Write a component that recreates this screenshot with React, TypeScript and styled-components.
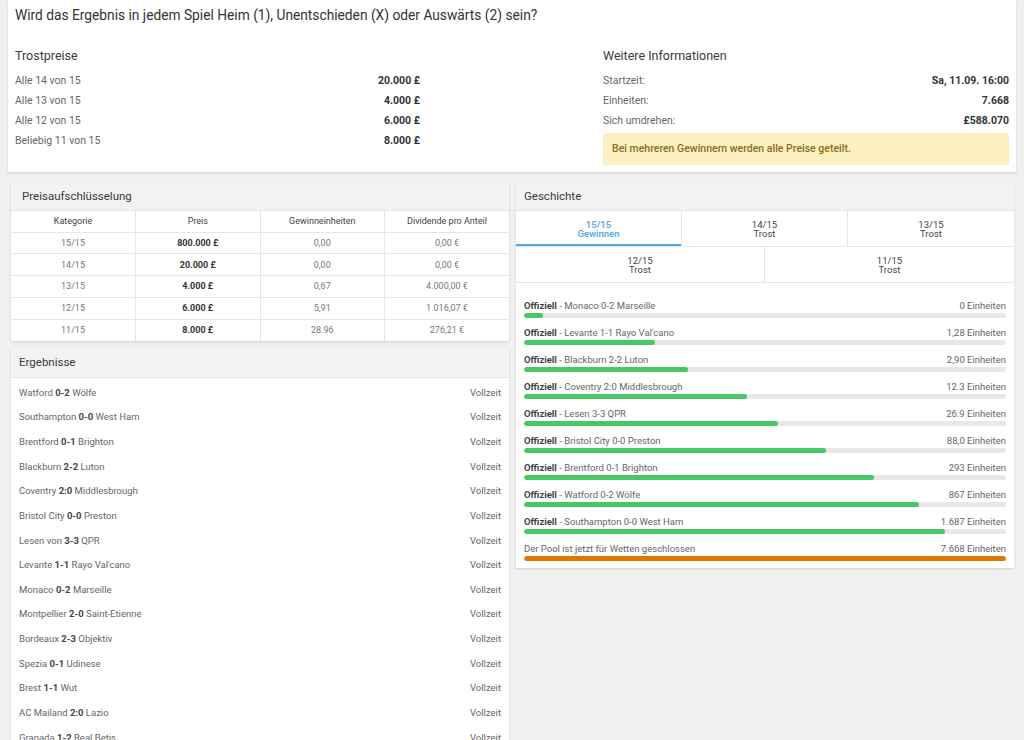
import React from "react";
import styled, { createGlobalStyle } from "styled-components";

const Global = createGlobalStyle`
  html, body { margin: 0; padding: 0; background: #f0f0f0; }
  body { font-family: Roboto, "Noto Sans", "Liberation Sans", sans-serif; color: #555; }
  * { box-sizing: border-box; }
`;

const Page = styled.div`
  width: 1024px;
  min-height: 740px;
  overflow: hidden;
`;

const TopCard = styled.section`
  margin: 0 8px;
  height: 172px;
  background: #fff;
  box-shadow: 0 1px 2px rgba(0, 0, 0, 0.12);
  padding: 6px 7px 0;
`;

const Title = styled.h1`
  margin: 0;
  font-size: 13.75px;
  line-height: 19px;
  font-weight: 400;
  color: #333;
`;

const InfoGrid = styled.div`
  display: grid;
  grid-template-columns: 405px 1fr 406px;
  margin-top: 21px;
`;

const InfoCol = styled.div<{ $col: number }>`
  grid-column: ${(p) => p.$col};
  display: flex;
  flex-direction: column;
`;

const InfoHeading = styled.h2`
  margin: 0 0 5px;
  font-size: 12.5px;
  line-height: 20px;
  font-weight: 400;
  color: #3a3a3a;
`;

const InfoRow = styled.div`
  display: flex;
  justify-content: space-between;
  font-size: 10.5px;
  line-height: 20px;
  color: #666;
`;

const InfoValue = styled.span`
  font-weight: 700;
  color: #333;
`;

const Notice = styled.div`
  margin-top: 2px;
  height: 32px;
  background: #fdf1c2;
  border-radius: 2px;
  color: #8a6d12;
  font-size: 10.5px;
  font-weight: 500;
  line-height: 32px;
  padding: 0 9px;
`;

const Lower = styled.div`
  display: grid;
  grid-template-columns: 498px 498px;
  gap: 7px;
  margin: 9px 10px 0 11px;
  align-items: start;
`;

const Column = styled.div`
  display: flex;
  flex-direction: column;
  gap: 7px;
`;

const Panel = styled.section`
  background: #fff;
  box-shadow: 0 1px 2px rgba(0, 0, 0, 0.14);
`;

const PanelHeader = styled.div<{ $pad: number }>`
  height: 30px;
  background: #f2f2f2;
  padding: 0 ${(p) => p.$pad}px;
  display: flex;
  align-items: center;
  font-size: 11.5px;
  font-weight: 400;
  color: #3a3a3a;
  border-bottom: 1px solid #e6e6e6;
`;

const Table = styled.table`
  width: 100%;
  border-collapse: collapse;
  table-layout: fixed;
  font-size: 9px;
  color: #666;
`;

const Th = styled.th`
  height: 21px;
  font-weight: 400;
  color: #444;
  border: 1px solid #e6e6e6;
  border-top: 0;
  text-align: center;
  &:first-child { border-left: 0; }
  &:last-child { border-right: 0; }
`;

const Td = styled.td<{ $bold?: boolean }>`
  height: 21.8px;
  padding: 0;
  text-align: center;
  border: 1px solid #e6e6e6;
  font-weight: ${(p) => (p.$bold ? 700 : 400)};
  color: ${(p) => (p.$bold ? "#333" : "#777")};
  &:first-child { border-left: 0; }
  &:last-child { border-right: 0; }
  tr:last-child & { border-bottom: 0; }
`;

const ResultList = styled.div`
  padding-top: 2px;
`;

const ResultRow = styled.div`
  height: 24.64px;
  padding: 0 8px;
  display: flex;
  justify-content: space-between;
  align-items: center;
  font-size: 9.5px;
  color: #666;
`;

const Score = styled.b`
  font-weight: 700;
  color: #444;
`;

const TabRow = styled.div<{ $cols: number }>`
  display: grid;
  grid-template-columns: repeat(${(p) => p.$cols}, 1fr);
  border-bottom: 1px solid #e6e6e6;
`;

const Tab = styled.div<{ $active?: boolean }>`
  height: 35px;
  display: flex;
  flex-direction: column;
  align-items: center;
  justify-content: center;
  font-size: 9.5px;
  line-height: 9px;
  color: ${(p) => (p.$active ? "#4ea6e2" : "#444")};
  font-weight: ${(p) => (p.$active ? 500 : 400)};
  border-right: 1px solid #e6e6e6;
  box-shadow: ${(p) => (p.$active ? "inset 0 -2px 0 #4ea6e2" : "none")};
  &:last-child { border-right: 0; }
`;

const HistoryList = styled.div`
  padding: 16px 8px 7px;
  display: flex;
  flex-direction: column;
  gap: 8px;
`;

const HistoryItem = styled.div`
  display: flex;
  flex-direction: column;
`;

const HistoryLabel = styled.div`
  display: flex;
  justify-content: space-between;
  font-size: 9.5px;
  line-height: 14px;
  color: #666;
`;

const Official = styled.b`
  font-weight: 700;
  color: #444;
`;

const Track = styled.div`
  height: 5px;
  border-radius: 3px;
  background: #e8e8e8;
  overflow: hidden;
`;

const Fill = styled.div<{ $orange?: boolean }>`
  height: 100%;
  border-radius: 3px;
  background: ${(p) => (p.$orange ? "#e07800" : "#48c764")};
`;

const consolation = [
  ["Alle 14 von 15", "20.000 £"],
  ["Alle 13 von 15", "4.000 £"],
  ["Alle 12 von 15", "6.000 £"],
  ["Beliebig 11 von 15", "8.000 £"],
];

const info = [
  ["Startzeit:", "Sa, 11.09. 16:00"],
  ["Einheiten:", "7.668"],
  ["Sich umdrehen:", "£588.070"],
];

const breakdown = [
  ["15/15", "800.000 £", "0,00", "0,00 €"],
  ["14/15", "20.000 £", "0,00", "0,00 €"],
  ["13/15", "4.000 £", "0,67", "4.000,00 €"],
  ["12/15", "6.000 £", "5,91", "1.016,07 €"],
  ["11/15", "8.000 £", "28.96", "276,21 €"],
];

const results = [
  ["Watford", "0-2", "Wölfe"],
  ["Southampton", "0-0", "West Ham"],
  ["Brentford", "0-1", "Brighton"],
  ["Blackburn", "2-2", "Luton"],
  ["Coventry", "2:0", "Middlesbrough"],
  ["Bristol City", "0-0", "Preston"],
  ["Lesen von", "3-3", "QPR"],
  ["Levante", "1-1", "Rayo Val'cano"],
  ["Monaco", "0-2", "Marseille"],
  ["Montpellier", "2-0", "Saint-Etienne"],
  ["Bordeaux", "2-3", "Objektiv"],
  ["Spezia", "0-1", "Udinese"],
  ["Brest", "1-1", "Wut"],
  ["AC Mailand", "2:0", "Lazio"],
  ["Granada", "1-2", "Real Betis"],
];

const history: [string, string, number][] = [
  ["Monaco 0-2 Marseille", "0 Einheiten", 4],
  ["Levante 1-1 Rayo Val'cano", "1,28 Einheiten", 27.2],
  ["Blackburn 2-2 Luton", "2,90 Einheiten", 34],
  ["Coventry 2:0 Middlesbrough", "12.3 Einheiten", 46.3],
  ["Lesen 3-3 QPR", "26.9 Einheiten", 52.7],
  ["Bristol City 0-0 Preston", "88,0 Einheiten", 62.7],
  ["Brentford 0-1 Brighton", "293 Einheiten", 72.6],
  ["Watford 0-2 Wölfe", "867 Einheiten", 81.9],
  ["Southampton 0-0 West Ham", "1.687 Einheiten", 87.3],
];

export default function App() {
  return (
    <Page>
      <Global />
      <TopCard>
        <Title>Wird das Ergebnis in jedem Spiel Heim (1), Unentschieden (X) oder Auswärts (2) sein?</Title>
        <InfoGrid>
          <InfoCol $col={1}>
            <InfoHeading>Trostpreise</InfoHeading>
            {consolation.map(([l, v]) => (
              <InfoRow key={l}>
                <span>{l}</span>
                <InfoValue>{v}</InfoValue>
              </InfoRow>
            ))}
          </InfoCol>
          <InfoCol $col={3}>
            <InfoHeading>Weitere Informationen</InfoHeading>
            {info.map(([l, v]) => (
              <InfoRow key={l}>
                <span>{l}</span>
                <InfoValue>{v}</InfoValue>
              </InfoRow>
            ))}
            <Notice>Bei mehreren Gewinnern werden alle Preise geteilt.</Notice>
          </InfoCol>
        </InfoGrid>
      </TopCard>
      <Lower>
        <Column>
          <Panel>
            <PanelHeader $pad={11}>Preisaufschlüsselung</PanelHeader>
            <Table>
              <thead>
                <tr>
                  <Th>Kategorie</Th>
                  <Th>Preis</Th>
                  <Th>Gewinneinheiten</Th>
                  <Th>Dividende pro Anteil</Th>
                </tr>
              </thead>
              <tbody>
                {breakdown.map((r) => (
                  <tr key={r[0]}>
                    <Td>{r[0]}</Td>
                    <Td $bold>{r[1]}</Td>
                    <Td>{r[2]}</Td>
                    <Td>{r[3]}</Td>
                  </tr>
                ))}
              </tbody>
            </Table>
          </Panel>
          <Panel>
            <PanelHeader $pad={8}>Ergebnisse</PanelHeader>
            <ResultList>
              {results.map(([h, s, a]) => (
                <ResultRow key={h}>
                  <span>
                    {h} <Score>{s}</Score> {a}
                  </span>
                  <span>Vollzeit</span>
                </ResultRow>
              ))}
            </ResultList>
          </Panel>
        </Column>
        <Column>
          <Panel>
            <PanelHeader $pad={8}>Geschichte</PanelHeader>
            <TabRow $cols={3}>
              <Tab $active>
                <span>15/15</span>
                <span>Gewinnen</span>
              </Tab>
              <Tab>
                <span>14/15</span>
                <span>Trost</span>
              </Tab>
              <Tab>
                <span>13/15</span>
                <span>Trost</span>
              </Tab>
            </TabRow>
            <TabRow $cols={2}>
              <Tab>
                <span>12/15</span>
                <span>Trost</span>
              </Tab>
              <Tab>
                <span>11/15</span>
                <span>Trost</span>
              </Tab>
            </TabRow>
            <HistoryList>
              {history.map(([m, u, pct]) => (
                <HistoryItem key={m}>
                  <HistoryLabel>
                    <span>
                      <Official>Offiziell</Official> - {m}
                    </span>
                    <span>{u}</span>
                  </HistoryLabel>
                  <Track>
                    <Fill style={{ width: `${pct}%` }} />
                  </Track>
                </HistoryItem>
              ))}
              <HistoryItem>
                <HistoryLabel>
                  <span>Der Pool ist jetzt für Wetten geschlossen</span>
                  <span>7.668 Einheiten</span>
                </HistoryLabel>
                <Track>
                  <Fill $orange style={{ width: "100%" }} />
                </Track>
              </HistoryItem>
            </HistoryList>
          </Panel>
        </Column>
      </Lower>
    </Page>
  );
}
